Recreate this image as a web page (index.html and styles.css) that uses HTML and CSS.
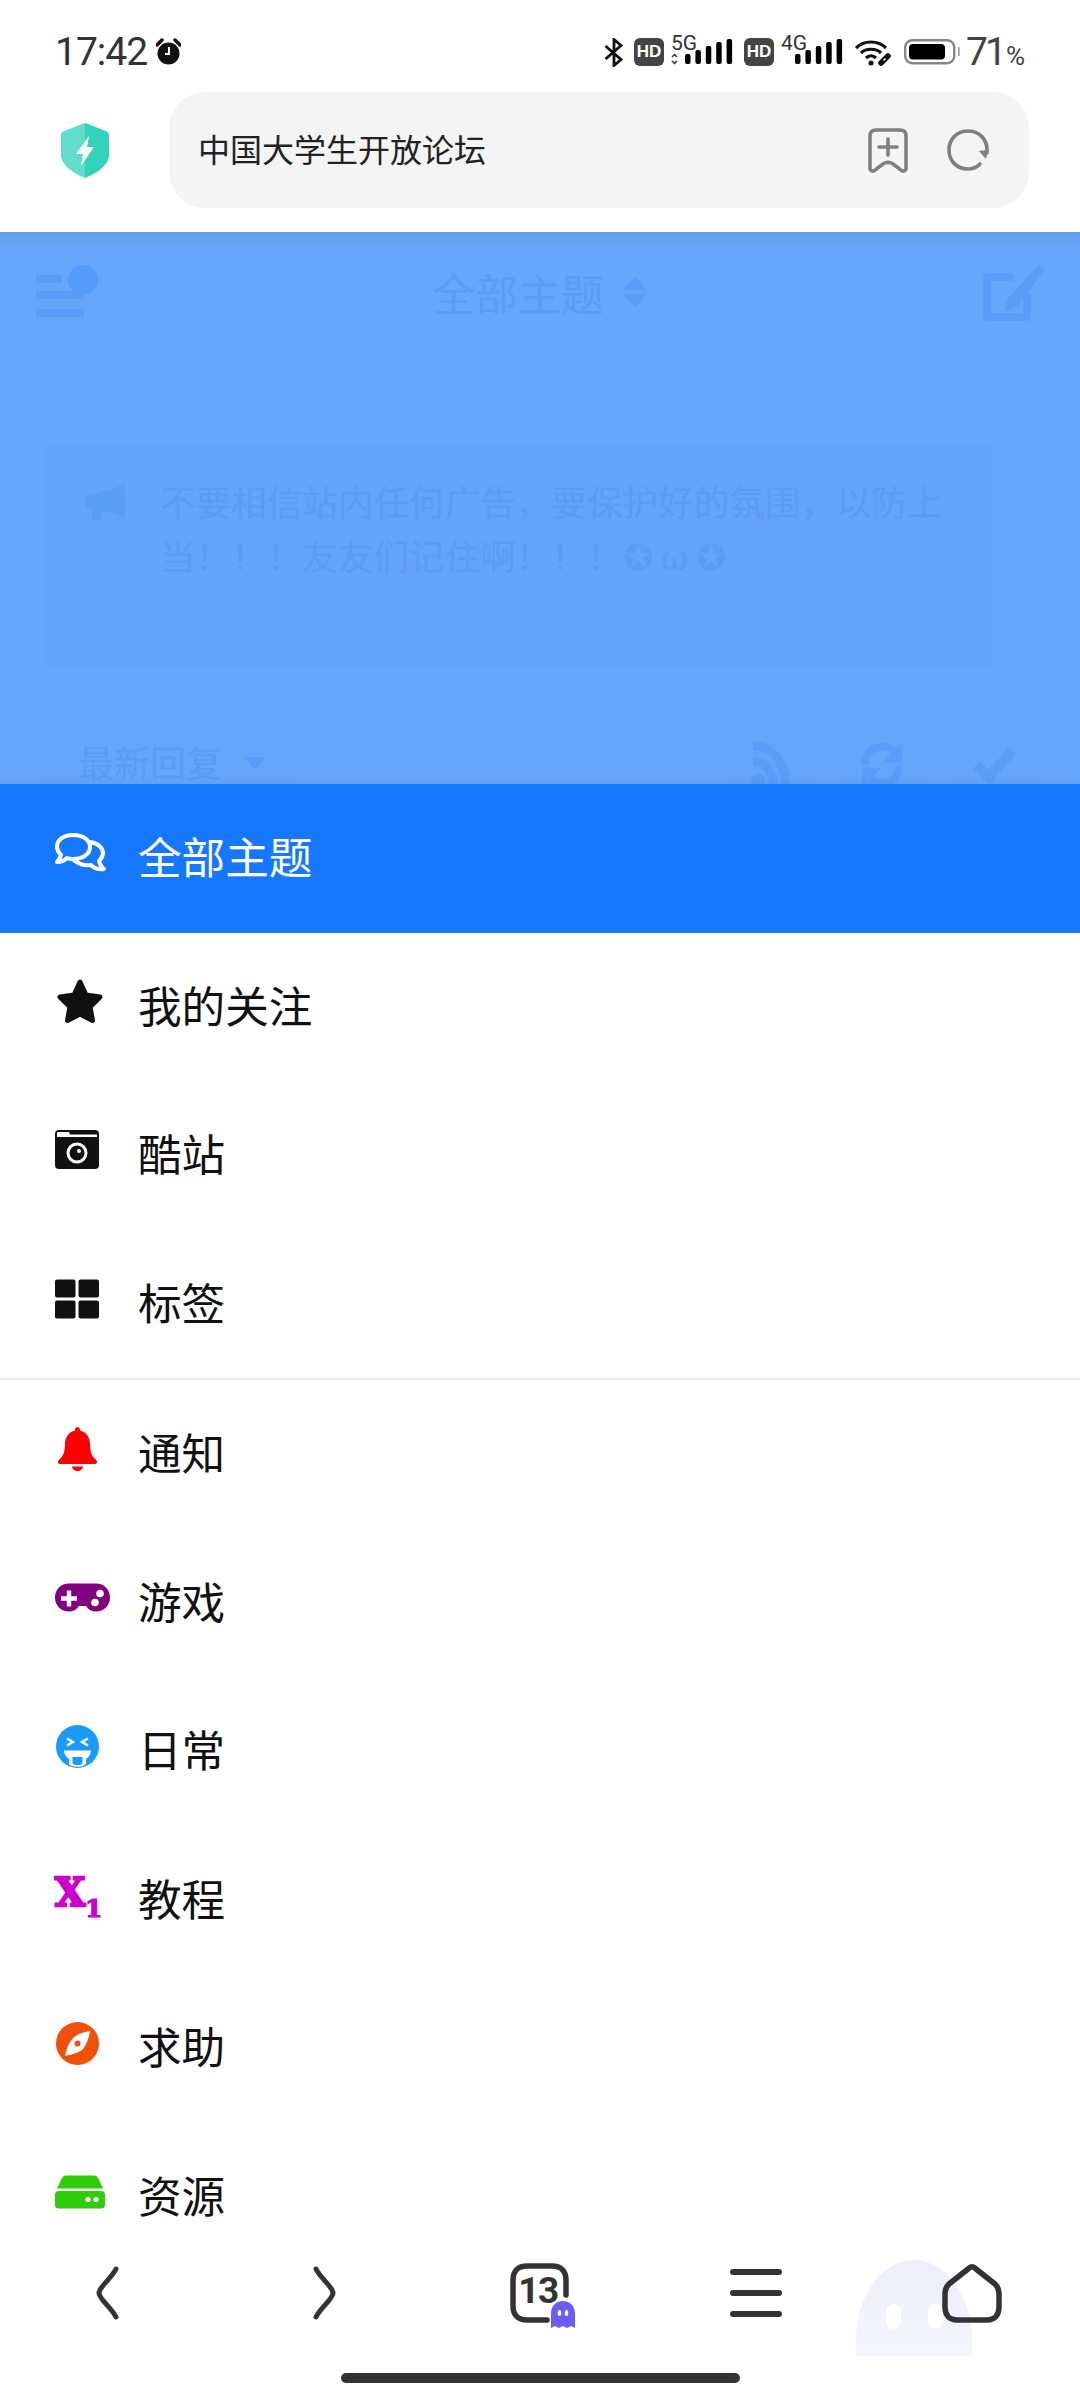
FILE: index.html
```html
<!DOCTYPE html>
<html lang="zh-CN">
<head>
  <meta charset="UTF-8" />
  <meta name="viewport" content="width=device-width, initial-scale=1.0"/>
  <title>中国大学生开放论坛</title>
  <link rel="stylesheet" href="styles.css">
</head>
<body>
  <div class="status">
    <span class="time">17:42</span>
    <svg class="alarm" viewBox="0 0 25 28"><circle cx="12.5" cy="15.5" r="11" fill="#111"/><path d="M1 7 L6 2 M24 7 L19 2" stroke="#111" stroke-width="3.5" stroke-linecap="round"/><path d="M13 9 V16 H9" stroke="#fff" stroke-width="2" fill="none"/></svg>
    <div class="status-right">
      <svg class="bt" viewBox="0 0 20 29"><path d="M1.5 8 L17 21.5 L10 27.5 V1.5 L17 7.5 L1.5 21" stroke="#111" stroke-width="2.8" fill="none"/></svg>
      <svg class="signal" viewBox="0 0 99 40">
        <rect y="6" width="30" height="28" rx="6" fill="#444"/>
        <text class="hd" x="15" y="25" text-anchor="middle">HD</text>
        <text class="net" x="37" y="18">5G</text>
        <path d="M38 25 L40.5 22.5 L43 25 M38 29 L40.5 31.5 L43 29" stroke="#333" stroke-width="1.5" fill="none"/>
        <rect x="51" y="22" width="5.5" height="10" rx="2"/><rect x="61.4" y="18" width="5.5" height="14" rx="2"/><rect x="71.8" y="14" width="5.5" height="18" rx="2"/><rect x="82.2" y="10" width="5.5" height="22" rx="2"/><rect x="92.6" y="7" width="5.5" height="25" rx="2"/>
      </svg>
      <svg class="signal" viewBox="0 0 99 40">
        <rect y="6" width="30" height="28" rx="6" fill="#444"/>
        <text class="hd" x="15" y="25" text-anchor="middle">HD</text>
        <text class="net" x="37" y="18">4G</text>
        <rect x="51" y="22" width="5.5" height="10" rx="2"/><rect x="61.4" y="18" width="5.5" height="14" rx="2"/><rect x="71.8" y="14" width="5.5" height="18" rx="2"/><rect x="82.2" y="10" width="5.5" height="22" rx="2"/><rect x="92.6" y="7" width="5.5" height="25" rx="2"/>
      </svg>
      <svg class="wifi" viewBox="0 0 38 27"><path d="M2 9 C10 1 24 1 32 9 M7 14 C12 9 22 9 27 14 M12 19 C15 16 19 16 22 19" stroke="#111" stroke-width="3.2" fill="none"/><circle cx="17" cy="24" r="2.5" fill="#111"/><path d="M27 24 L34 17" stroke="#111" stroke-width="5.5" stroke-linecap="round"/><path d="M29.5 21.5 L31.5 19.5" stroke="#fff" stroke-width="1.5"/></svg>
      <svg class="battery" viewBox="0 0 56 26"><rect x="1.2" y="1.2" width="49" height="23" rx="7" fill="none" stroke="#888" stroke-width="2.4"/><rect x="5" y="5" width="36" height="15.5" rx="4" fill="#000"/><rect x="54" y="8" width="1.6" height="9" fill="#999"/></svg>
      <span class="pct">71<small>%</small></span>
    </div>
  </div>

  <div class="browser">
    <svg class="shield" viewBox="0 0 48 55">
      <path d="M24 0 L24 55 C12 50 0 42 0 32 V12 C0 10 1 9 3 8 Z" fill="#62dccb"/>
      <path d="M24 0 L45 8 C47 9 48 10 48 12 V32 C48 42 36 50 24 55 Z" fill="#35d2ba"/>
      <path d="M28 13 L15 31 H22 L20 43 L33 24 H26 Z" fill="#fff"/>
    </svg>
    <div class="urlbar">
      <span class="url">中国大学生开放论坛</span>
      <svg class="bookmark" viewBox="0 0 40 45"><path d="M8 2 H32 C36 2 38 4 38 8 V40 C38 43 35 44 33 42 L25 36 C22 34 18 34 15 36 L7 42 C5 44 2 43 2 40 V8 C2 4 4 2 8 2 Z M20 11 V27 M11 19 H29" fill="none" stroke="#7f7f7f" stroke-width="3.6" stroke-linecap="round"/></svg>
      <svg class="reload" viewBox="0 0 42 42"><path d="M33 35 C29 39 25 40 21 40 C10 40 2 32 2 21 C2 10 10 2 21 2 C32 2 40 10 40 21 L40 24" fill="none" stroke="#7f7f7f" stroke-width="3.6" stroke-linecap="round"/><path d="M32 22 L41 21 L39 30 Z" fill="#7f7f7f"/></svg>
    </div>
  </div>

  <div class="page">
    <div class="forum-head">
      <svg class="side-icon" viewBox="0 0 62 54"><rect y="10" width="26" height="8"/><rect y="26" width="48" height="8"/><rect y="44" width="48" height="8"/><circle cx="47" cy="15" r="15" fill="#559bfb"/></svg>
      <div class="forum-title">全部主题<svg class="sort" viewBox="0 0 24 30"><path d="M12 0 L24 13 H0 Z M0 17 H24 L12 30 Z"/></svg></div>
      <svg class="edit-icon" viewBox="0 0 62 56"><path d="M30 12 H6 C4 12 4 13 4 14 V50 C4 52 5 52 6 52 H42 C44 52 44 51 44 50 V28" fill="none" stroke="#5a9df7" stroke-width="8"/><path d="M56 0 L62 5 L34 42 L22 46 L24 34 Z"/></svg>
    </div>
    <div class="notice">
      <div class="notice-body">
        <svg class="horn" viewBox="0 0 40 36"><path d="M40 0 V34 L34 32 L18 26 L16 36 H8 L6 25 C2 25 0 22 0 18 C0 13 3 11 7 11 L30 4 Z"/></svg>
        <p class="notice-text">不要相信站内任何广告，要保护好的氛围，以防上当！！！友友们记住啊！！！✪ ω ✪</p>
      </div>
    </div>
    <div class="toolbar">
      <div class="sort-btn">最新回复<svg class="caret" viewBox="0 0 22 13"><path d="M0 0 H22 L11 13 Z"/></svg></div>
      <div class="tool-btns">
        <div class="tool"><svg viewBox="0 0 40 50"><path d="M3 6 C22 6 36 22 36 48 M3 21 C14 21 24 32 24 48" fill="none" stroke="#5a9df7" stroke-width="9"/><circle cx="8" cy="40" r="7"/></svg></div>
        <div class="tool"><svg viewBox="0 0 46 50"><path d="M40 18 C36 8 28 6 22 6 C12 6 6 14 5 24 M6 32 C10 42 18 44 24 44 C34 44 40 36 41 26" fill="none" stroke="#5a9df7" stroke-width="8"/><path d="M44 0 V22 H24 Z"/><path d="M2 50 V28 H22 Z"/></svg></div>
        <div class="tool"><svg viewBox="0 0 44 36"><path d="M4 18 L17 30 L40 4" fill="none" stroke="#5a9df7" stroke-width="10"/></svg></div>
      </div>
    </div>
  </div>

  <ul class="menu">
    <li class="menu-item active">
      <svg class="menu-icon" viewBox="0 0 56 56"><path d="M18 11 C8 11 2 16 2 23 C2 26 4 29 6 31 C5 34 4 36 2 38 C6 38 10 36 12 34 C14 35 16 35 18 35 C28 35 35 30 35 23 C35 16 28 11 18 11 Z M35 18 C43 19 48 24 48 29 C48 32 46 35 44 37 C45 40 46 43 49 45 C44 46 39 44 36 41 C30 42 22 40 18 35" fill="none" stroke="#fff" stroke-width="4" stroke-linejoin="round"/></svg>
      <span>全部主题</span>
    </li>
    <li class="menu-item">
      <svg class="menu-icon" viewBox="0 0 56 56"><polygon points="25,9 31,22 45,24 35,34 37.5,47.5 25,41 12.5,47.5 15,34 5,24 19,22" fill="#111" stroke="#111" stroke-width="5" stroke-linejoin="round"/></svg>
      <span>我的关注</span>
    </li>
    <li class="menu-item">
      <svg class="menu-icon" viewBox="0 0 56 56"><rect y="9" width="44" height="39" rx="4" fill="#111"/><path d="M2 15 V12 Q2 11 3 11 H14 L15 13.5 H42 V16 H2 Z" fill="#fff"/><circle cx="22" cy="32" r="9" fill="none" stroke="#fff" stroke-width="3"/><circle cx="24" cy="30" r="2" fill="#fff"/></svg>
      <span>酷站</span>
    </li>
    <li class="menu-item">
      <svg class="menu-icon" viewBox="0 0 56 56"><rect y="9.5" width="20.5" height="18" rx="2" fill="#111"/><rect x="23.5" y="9.5" width="20.5" height="18" rx="2" fill="#111"/><rect y="30.5" width="20.5" height="18" rx="2" fill="#111"/><rect x="23.5" y="30.5" width="20.5" height="18" rx="2" fill="#111"/></svg>
      <span>标签</span>
    </li>
    <li class="menu-sep"></li>
    <li class="menu-item">
      <svg class="menu-icon" viewBox="0 0 56 56"><path d="M22.5 7 C24 7 25 8 25 10.5 C31 12 35 17 35 24 C35 34 38 37 41 40 C43 42 42 44 39.5 44 H5.5 C3 44 2 42 4 40 C7 37 10 34 10 24 C10 17 14 12 20 10.5 C20 8 21 7 22.5 7 Z M17 46.5 H28 C28 49 25.5 51 22.5 51 C19.5 51 17 49 17 46.5 Z" fill="#f00"/></svg>
      <span>通知</span>
    </li>
    <li class="menu-item">
      <svg class="menu-icon" viewBox="0 0 56 56"><path d="M14 14.5 H41 C49 14.5 55 20.5 55 28.5 C55 36.5 49 42.5 41 42.5 C36 42.5 33 40 31 37 H24 C22 40 19 42.5 14 42.5 C6 42.5 0 36.5 0 28.5 C0 20.5 6 14.5 14 14.5 Z" fill="#800080"/><path d="M6 29.5 H22 M14 21.5 V37.5" stroke="#fff" stroke-width="4.4"/><circle cx="45" cy="24.5" r="3.8" fill="#fff"/><circle cx="40" cy="33.5" r="3.8" fill="#fff"/></svg>
      <span>游戏</span>
    </li>
    <li class="menu-item">
      <svg class="menu-icon" viewBox="0 0 56 56"><circle cx="22.5" cy="29.5" r="21.5" fill="#1a9bfc"/><path d="M12 21.5 L18 25 L12 28.5 M33 21.5 L27 25 L33 28.5" fill="none" stroke="#fff" stroke-width="2.4"/><path d="M9 33.5 H36 C36 37 34 40 31 42 V46 C31 51 14 51 14 46 V42 C11 40 9 37 9 33.5 Z" fill="#fff"/><path d="M17.5 40 H27.5 V45.5 C27.5 49 17.5 49 17.5 45.5 Z" fill="#1a9bfc"/></svg>
      <span>日常</span>
    </li>
    <li class="menu-item">
      <svg class="menu-icon" viewBox="0 0 56 56"><text class="sub-x" x="0" y="40">X</text><text class="sub-1" x="30" y="51">1</text></svg>
      <span>教程</span>
    </li>
    <li class="menu-item">
      <svg class="menu-icon" viewBox="0 0 56 56"><circle cx="22.5" cy="29.5" r="21.5" fill="#f0500a"/><path d="M35 17 C34 24 31 32 27 36 C23 39 15 41 10 42 C11 36 14 28 18 24 C22 20 29 18 35 17 Z" fill="#fff"/><circle cx="22.5" cy="29.5" r="3" fill="#f0500a"/></svg>
      <span>求助</span>
    </li>
    <li class="menu-item">
      <svg class="menu-icon" viewBox="0 0 56 56"><path d="M11 12.5 H39 C41 12.5 42 13.5 43 15 L48 25.5 H2 L7 15 C8 13.5 9 12.5 11 12.5 Z" fill="#2ecc0a"/><rect y="28" width="50" height="17.5" rx="4" fill="#2ecc0a"/><circle cx="33" cy="36.5" r="2.6" fill="#fff"/><circle cx="41" cy="36.5" r="2.6" fill="#fff"/></svg>
      <span>资源</span>
    </li>
  </ul>

  <div class="bottom">
    <div class="ghost-bg"><i></i><i></i></div>
    <div class="bottom-icons">
      <svg class="nav-icon" viewBox="0 0 60 60"><path d="M38 6 C33 16 21 24 21 30 C21 36 33 44 38 54" fill="none" stroke="#333" stroke-width="5" stroke-linecap="round"/></svg>
      <svg class="nav-icon" viewBox="0 0 60 60"><path d="M22 6 C27 16 39 24 39 30 C39 36 27 44 22 54" fill="none" stroke="#333" stroke-width="5" stroke-linecap="round"/></svg>
      <svg class="nav-icon tabs" viewBox="0 0 60 60">
        <path d="M56 32 V17 C56 8 51 3 42 3 H17 C8 3 3 8 3 17 V43 C3 52 8 57 17 57 H37" fill="none" stroke="#333" stroke-width="5.5" stroke-linecap="round"/>
        <text class="tab-count" x="28" y="40" text-anchor="middle">13</text>
        <path d="M41 51 C41 43 46 38 53 38 C60 38 65 43 65 51 V65 L61 63 L57 65 L53 63 L49 65 L45 63 L41 65 Z" fill="#6a5cf5"/>
        <ellipse cx="49.5" cy="50" rx="1.8" ry="3" fill="#fff"/><ellipse cx="56.5" cy="50" rx="1.8" ry="3" fill="#fff"/>
      </svg>
      <svg class="nav-icon" viewBox="0 0 60 60"><rect x="4" y="6" width="52" height="6" rx="3" fill="#333"/><rect x="4" y="27" width="52" height="6" rx="3" fill="#333"/><rect x="4" y="48" width="52" height="6" rx="3" fill="#333"/></svg>
      <svg class="nav-icon home" viewBox="0 0 60 60"><path d="M26 6 Q30 2 34 6 L53 21 Q57 25 57 30 V44 C57 52 53 57 45 57 H15 C7 57 3 52 3 44 V30 Q3 25 7 21 Z" fill="none" stroke="#333" stroke-width="5.5" stroke-linejoin="round"/></svg>
    </div>
    <div class="gesture"></div>
  </div>
</body>
</html>
```

FILE: styles.css
```css
* {
  box-sizing: border-box;
}
body {
  margin: 0;
  width: 1080px;
  height: 2400px;
  overflow: hidden;
  display: flex;
  flex-direction: column;
  background: #fff;
  font-family: "Noto Sans CJK SC", "Noto Sans", sans-serif;
  color: #111;
}
svg {
  display: block;
  flex: none;
}

.status {
  height: 92px;
  padding: 30px 55px 0 55px;
  display: flex;
  align-items: flex-start;
}
.time {
  font-family: Roboto, sans-serif;
  font-size: 39px;
  line-height: 44px;
  letter-spacing: -1px;
  color: #333;
}
.alarm {
  width: 25px;
  height: 28px;
  margin: 8px 0 0 9px;
}
.status-right {
  margin-left: auto;
  display: flex;
  align-items: flex-start;
}
.bt {
  width: 20px;
  height: 29px;
  margin: 8px 10px 0 0;
}
.signal {
  width: 99px;
  height: 40px;
  margin: 2px 11px 0 0;
}
.hd {
  font-family: "Liberation Sans", sans-serif;
  font-weight: 700;
  font-size: 17px;
  fill: #fff;
}
.net {
  font-family: Roboto, sans-serif;
  font-size: 21px;
  fill: #333;
}
.wifi {
  width: 38px;
  height: 27px;
  margin: 9px 12px 0 0;
}
.battery {
  width: 56px;
  height: 26px;
  margin: 9px 6px 0 0;
}
.pct {
  font-family: Roboto, sans-serif;
  font-size: 39px;
  line-height: 44px;
  letter-spacing: -3px;
  color: #444;
}
.pct small {
  font-size: 26px;
  letter-spacing: 0;
  margin-left: 2px;
}

.browser {
  height: 140px;
  padding: 0 51px 24px 61px;
  display: flex;
  align-items: center;
  gap: 60px;
}
.shield {
  width: 48px;
  height: 55px;
  margin-top: 1px;
}
.urlbar {
  flex: 1;
  height: 116px;
  padding: 0 40px 0 29px;
  border-radius: 36px;
  background: #f4f4f4;
  display: flex;
  align-items: center;
}
.url {
  flex: 1;
  margin-bottom: 5px;
  font-size: 32px;
  color: #222;
}
.bookmark {
  width: 40px;
  height: 45px;
  margin-right: 39px;
}
.reload {
  width: 42px;
  height: 42px;
}

.page {
  height: 552px;
  flex: none;
  background: linear-gradient(#649fe9, #66a7fc 18px);
  color: #5a9df7;
  fill: #5a9df7;
}
.forum-head {
  height: 129px;
  padding: 33px 35px 0 36px;
  border-bottom: 1px solid #64a5fa;
  display: flex;
  justify-content: space-between;
  align-items: flex-start;
}
.side-icon {
  width: 62px;
  height: 54px;
}
.forum-title {
  font-size: 43px;
  line-height: 54px;
  display: flex;
  align-items: center;
  gap: 19px;
  margin-right: 2px;
}
.sort {
  width: 24px;
  height: 30px;
}
.edit-icon {
  width: 62px;
  height: 56px;
}
.notice {
  margin: 83px 58px 0 44px;
  height: 225px;
  background: #65a6fb;
}
.notice-body {
  height: 100%;
  margin-right: 27px;
  padding: 40px 40px 0 41px;
  background: #64a4fa;
  display: flex;
  gap: 35px;
}
.horn {
  width: 40px;
  height: 36px;
}
.notice-text {
  margin: -10px 0 0;
  width: 790px;
  font-size: 35.6px;
  line-height: 54px;
}
.toolbar {
  margin: 45px 39px 0 40px;
  display: flex;
  justify-content: space-between;
}
.sort-btn {
  width: 260px;
  height: 100px;
  padding: 25px 0 0 38px;
  border-radius: 8px;
  background: #65a6fb;
  font-size: 36px;
  line-height: 44px;
  display: flex;
  align-items: flex-start;
  gap: 22px;
}
.caret {
  width: 22px;
  height: 13px;
  margin-top: 18px;
}
.tool-btns {
  display: flex;
  gap: 18px;
}
.tool {
  width: 94px;
  height: 100px;
  padding-top: 26px;
  border-radius: 8px;
  background: #65a6fb;
  display: flex;
  justify-content: center;
}
.tool svg {
  width: 44px;
  height: 50px;
}

.menu {
  flex: 1;
  min-height: 0;
  margin: 0;
  padding: 0;
  list-style: none;
  overflow: hidden;
  background: #fff;
  box-shadow: 0 -3px 8px rgba(0, 0, 0, 0.05);
  position: relative;
}
.menu-item {
  height: 148.5px;
  padding-left: 55px;
  display: flex;
  align-items: center;
  font-size: 43.6px;
  line-height: 1.2;
}
.menu-item span {
  margin-bottom: 6px;
}
.menu-item.active {
  background: #1677ff;
  color: #fff;
}
.menu-icon {
  width: 56px;
  height: 56px;
  margin: 0 27px 12px 0;
  overflow: visible;
}
.menu-sep {
  height: 2px;
  background: #e3ecf0;
}
.sub-x {
  font-family: "DejaVu Serif", serif;
  font-weight: 700;
  font-size: 39px;
  fill: #cc00cc;
  stroke: #cc00cc;
  stroke-width: 2.4px;
}
.sub-1 {
  font-family: "DejaVu Serif", serif;
  font-weight: 700;
  font-size: 25px;
  fill: #cc00cc;
  stroke: #cc00cc;
  stroke-width: 1.2px;
}

.bottom {
  height: 174px;
  flex: none;
  padding-top: 37px;
  background: #fff;
  position: relative;
}
.ghost-bg {
  position: absolute;
  left: 856px;
  top: 34px;
  width: 116px;
  height: 96px;
  border-radius: 58px 58px 0 0 / 80px 80px 0 0;
  background: linear-gradient(#eeeefc, #f5f5fd);
  display: flex;
  justify-content: center;
  gap: 27px;
  padding-top: 44px;
}
.ghost-bg i {
  width: 15px;
  height: 25px;
  border-radius: 8px;
  background: #fff;
}
.bottom-icons {
  display: grid;
  grid-template-columns: repeat(5, 1fr);
  justify-items: center;
  position: relative;
}
.nav-icon {
  width: 60px;
  height: 60px;
}
.tabs {
  overflow: visible;
}
.tab-count {
  font-family: Roboto, sans-serif;
  font-weight: 700;
  font-size: 37px;
  letter-spacing: -1.5px;
  fill: #333;
}
.gesture {
  width: 399px;
  height: 10px;
  margin: 50px auto 0;
  border-radius: 5px;
  background: #333;
}
```
